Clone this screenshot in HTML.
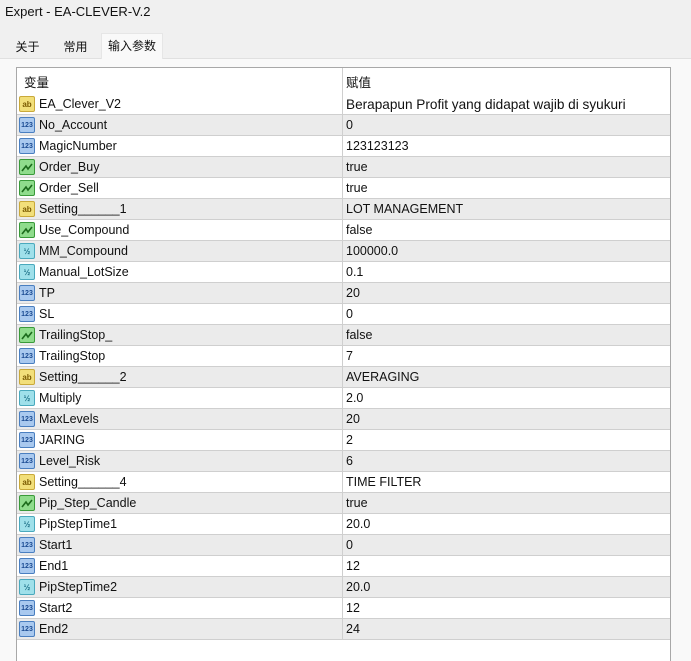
<!DOCTYPE html>
<html style="overflow:hidden;height:661px"><head><meta charset="utf-8"><style>
*{margin:0;padding:0;box-sizing:border-box}
body{width:691px;height:661px;background:#f0f0f0;font-family:"Liberation Sans","Noto Sans CJK SC",sans-serif;font-size:12.5px;color:#111;position:relative;overflow:hidden}
.title{position:absolute;left:0;top:0;width:691px;height:28px;background:#f0f0f0;padding:4px 0 0 5px;font-size:13px}
.tab{position:absolute;top:35px;height:23px;font-size:12px;padding-top:3px;text-align:center}
.page{position:absolute;left:0;top:58px;width:691px;height:603px;background:#f9f9f9;border-top:1px solid #e0e0e0}
.panel{position:absolute;left:16px;top:67px;width:655px;height:594px;background:#fff;border:1px solid #a8a8a8;border-bottom:none}
.hdr{position:absolute;top:0;height:25px;padding-top:4px;font-size:12.5px}
.row{position:absolute;left:0;width:653px;height:21px;border-bottom:1px solid #cfcfcf}
.row.g{background:#ebebeb}
.n{position:absolute;left:22px;top:3px}
.v{position:absolute;left:329px;top:3px}
.col{position:absolute;left:325px;top:0;width:1px;height:571px;background:#cfcfcf}
.ic{position:absolute;left:2px;top:2px;width:16px;height:16px;border-radius:2px;font-size:8px;font-weight:bold;text-align:center;line-height:15px}
.s{background:#f2df7a;border:1px solid #c9a93a;color:#7a5a00}
.i{background:#a9c9ef;border:1px solid #4a7fc0;color:#1b4b92;font-size:7px}
.b{background:#8fdc8c;border:1px solid #3a9a3a}
.d{background:#9fe0ea;border:1px solid #4aa9bd;color:#1b6f86;font-size:8px}
</style></head><body>
<div class="title">Expert - EA-CLEVER-V.2</div>
<div class="page"></div>
<div class="tab" style="left:5px;width:45px;background:#f0f0f0">关于</div>
<div class="tab" style="left:53px;width:45px;background:#f0f0f0">常用</div>
<div class="tab" style="left:101px;width:62px;background:#f9f9f9;top:33px;height:26px;border:1px solid #e6e6e6;border-bottom:none">输入参数</div>
<div class="panel">
<div class="hdr" style="left:7px">变量</div>
<div class="hdr" style="left:329px">赋值</div>
<div id="rows"></div>
<div class="col"></div>
</div>
<script>
var d=[["s","EA_Clever_V2","<span style='font-size:13.6px'>Berapapun Profit yang didapat wajib di syukuri</span>"],["i","No_Account","0"],["i","MagicNumber","123123123"],["b","Order_Buy","true"],["b","Order_Sell","true"],["s","Setting______1","LOT MANAGEMENT"],["b","Use_Compound","false"],["d","MM_Compound","100000.0"],["d","Manual_LotSize","0.1"],["i","TP","20"],["i","SL","0"],["b","TrailingStop_","false"],["i","TrailingStop","7"],["s","Setting______2","AVERAGING"],["d","Multiply","2.0"],["i","MaxLevels","20"],["i","JARING","2"],["i","Level_Risk","6"],["s","Setting______4","TIME FILTER"],["b","Pip_Step_Candle","true"],["d","PipStepTime1","20.0"],["i","Start1","0"],["i","End1","12"],["d","PipStepTime2","20.0"],["i","Start2","12"],["i","End2","24"]];
var h="";
d.forEach(function(r,k){
var t=r[0]=="s"?"ab":r[0]=="i"?"123":r[0]=="d"?"½":'<svg width="14" height="14" viewBox="0 0 14 14"><path d="M2 11L6 6L8 9L12 4" stroke="#1c6b1c" stroke-width="1.6" fill="none"/></svg>';
h+='<div class="row'+(k%2?' g':'')+'" style="top:'+(26+k*21)+'px"><div class="ic '+r[0]+'">'+t+'</div><div class="n">'+r[1]+'</div><div class="v">'+r[2]+'</div></div>';
});
document.getElementById("rows").innerHTML=h;
</script>
</body></html>
